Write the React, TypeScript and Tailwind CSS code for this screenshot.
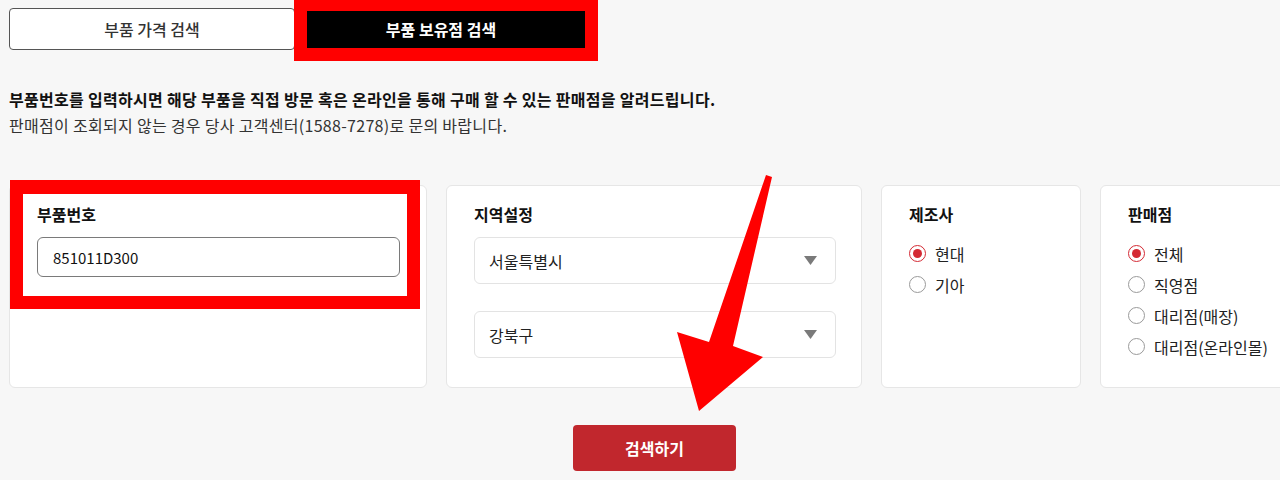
import { useState } from 'react'

const FONT = { fontFamily: '"Noto Sans CJK KR", "Noto Sans", sans-serif' }

function Radio({ checked, label }: { checked: boolean; label: string }) {
  return (
    <label className="flex h-[31px] items-center gap-[9px] text-[16px] text-[#222]">
      <span
        className={
          checked
            ? 'flex h-[17px] w-[17px] items-center justify-center rounded-full border border-[#d42a34] bg-white'
            : 'flex h-[17px] w-[17px] items-center justify-center rounded-full border border-[#9a9a9a] bg-white'
        }
      >
        {checked && <span className="h-[9px] w-[9px] rounded-full bg-[#d42a34]" />}
      </span>
      {label}
    </label>
  )
}

function Select({ value }: { value: string }) {
  return (
    <div className="flex h-[47px] items-center justify-between rounded-[6px] border border-[#e3e3e3] bg-white pl-[14px] pr-[18px] text-[16px] text-[#222]">
      <span>{value}</span>
      <svg width="13" height="9" viewBox="0 0 13 9">
        <path d="M0 0 H13 L6.5 9 Z" fill="#7a7a7a" />
      </svg>
    </div>
  )
}

export default function App() {
  const [partNo, setPartNo] = useState('851011D300')

  return (
    <div className="relative h-[480px] w-[1280px] overflow-hidden bg-[#f7f7f7]" style={FONT}>
      <div className="pl-[9px] pt-[8px]">
        {/* tabs */}
        <div className="flex">
          <button className="h-[42px] w-[286px] rounded-[4px] border border-[#555] bg-white text-[16px] font-medium text-[#333]">
            부품 가격 검색
          </button>
          <div className="relative ml-[2px] h-[42px] w-[288px]">
            <button className="h-full w-full bg-black text-[16px] font-bold text-white">부품 보유점 검색</button>
            <div className="pointer-events-none absolute left-[-3px] top-[-8px] h-[61px] w-[304px] border-b-[13px] border-l-[13px] border-r-[13px] border-t-[11px] border-[#ff0000]" />
          </div>
        </div>

        {/* description */}
        <div className="mt-[36px] text-[16px] leading-[26px] tracking-[0.3px]">
          <p className="font-bold text-[#111]">
            부품번호를 입력하시면 해당 부품을 직접 방문 혹은 온라인을 통해 구매 할 수 있는 판매점을 알려드립니다.
          </p>
          <p className="text-[#333]">판매점이 조회되지 않는 경우 당사 고객센터(1588-7278)로 문의 바랍니다.</p>
        </div>

        {/* filter cards */}
        <div className="w-[1291px]">
          <div className="mt-[47px] flex gap-[19px]">
            <div className="relative h-[203px] w-[418px] shrink-0 rounded-[6px] border border-[#e6e6e6] bg-white px-[27px] pt-[17px]">
              <div className="h-[22px] text-[16px] font-bold leading-[22px] text-[#111]">부품번호</div>
              <input
                value={partNo}
                onChange={e => setPartNo(e.target.value)}
                className="mt-[12px] h-[40px] w-[363px] rounded-[6px] border border-[#7a7a7a] bg-white px-[15px] text-[15px] text-[#111] outline-none"
              />
              <div className="pointer-events-none absolute left-[0px] top-[-6px] h-[129px] w-[410px] border-[13px] border-t-[14px] border-[#ff0000]" />
            </div>

            <div className="h-[203px] w-[416px] shrink-0 rounded-[6px] border border-[#e6e6e6] bg-white px-[27px] pt-[17px]">
              <div className="h-[22px] text-[16px] font-bold leading-[22px] text-[#111]">지역설정</div>
              <div className="mt-[12px] flex w-[362px] flex-col gap-[27px]">
                <Select value="서울특별시" />
                <Select value="강북구" />
              </div>
            </div>

            <div className="h-[203px] w-[200px] shrink-0 rounded-[6px] border border-[#e6e6e6] bg-white px-[27px] pt-[17px]">
              <div className="h-[22px] text-[16px] font-bold leading-[22px] text-[#111]">제조사</div>
              <div className="mt-[13px] flex flex-col">
                <Radio checked label="현대" />
                <Radio checked={false} label="기아" />
              </div>
            </div>

            <div className="h-[203px] w-[200px] shrink-0 rounded-[6px] border border-[#e6e6e6] bg-white px-[27px] pt-[17px]">
              <div className="h-[22px] text-[16px] font-bold leading-[22px] text-[#111]">판매점</div>
              <div className="mt-[13px] flex flex-col">
                <Radio checked label="전체" />
                <Radio checked={false} label="직영점" />
                <Radio checked={false} label="대리점(매장)" />
                <Radio checked={false} label="대리점(온라인몰)" />
              </div>
            </div>
          </div>

          <div className="mt-[37px] flex justify-center">
            <button className="h-[46px] w-[163px] rounded-[4px] bg-[#c1272d] text-[16px] font-bold text-white">검색하기</button>
          </div>
        </div>
      </div>

      {/* annotation arrow */}
      <svg className="pointer-events-none absolute left-0 top-0" width="1280" height="480">
        <polygon
          points="766,175 772,177 733,346 763,357 699,411 677,332 709,342"
          fill="#ff0000"
        />
      </svg>
    </div>
  )
}
